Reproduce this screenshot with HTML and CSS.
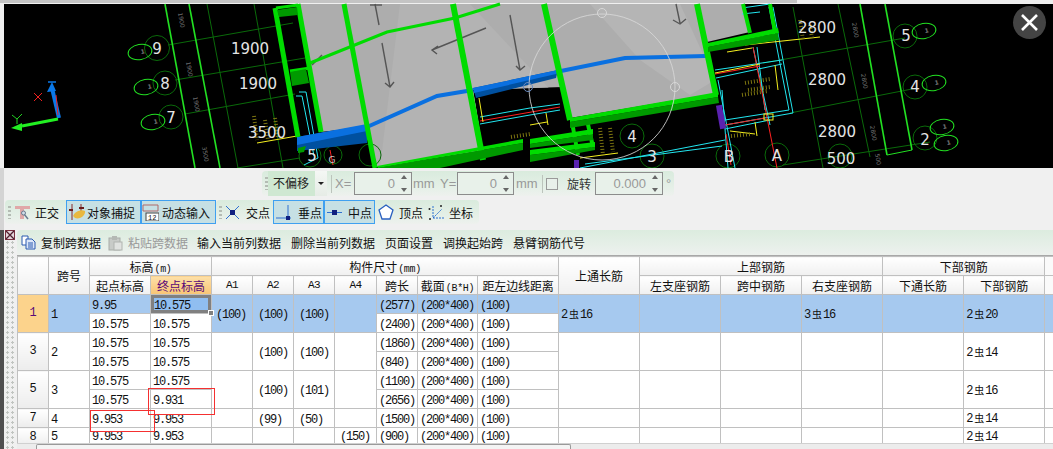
FILE: index.html
```html
<!DOCTYPE html>
<html lang="zh">
<head>
<meta charset="utf-8">
<title>梁平法表格</title>
<link rel="stylesheet" href="styles.css">
</head>
<body>
<div class="viewport">
<svg class="scene" width="1053" height="168" viewBox="0 0 1053 168">
  <defs>
    <clipPath id="floor"><polygon points="298,4 743,4 750,32 707,42 718,93 570,118 563,87 473,90 483,150 377,167 367,127 320,132"/></clipPath>
  </defs>
  <rect x="4" y="4" width="1049" height="164" fill="#000"/>
  <rect x="0" y="0" width="797" height="3" fill="#c4c4c4"/>
  <rect x="797" y="0" width="256" height="3" fill="#eee"/>
  <!-- floor -->
  <polygon points="298,4 743,4 750,32 707,42 718,93 570,118 563,87 473,90 483,150 377,167 367,127 320,132" fill="#adadad"/>
  <g clip-path="url(#floor)">
    <polygon points="400,4 470,4 560,100 470,168 380,168" fill="#b3b3b3"/>
    <polygon points="590,4 680,4 715,80 690,95 640,60" fill="#b5b5b5"/>
  </g>
  <!-- axes left -->
  <g fill="none" stroke="#0a6a0a" stroke-width="1">
    <line x1="207" y1="4" x2="238" y2="168"/><line x1="254" y1="4" x2="283" y2="168"/>
    <line x1="168" y1="45" x2="293" y2="23"/><line x1="175" y1="80" x2="305" y2="58"/><line x1="185" y1="114" x2="295" y2="94"/><line x1="237" y1="168" x2="300" y2="158"/>
    <circle cx="157" cy="48" r="12.5"/><circle cx="165" cy="83" r="12"/><circle cx="171" cy="117" r="12"/>
    <circle cx="310" cy="156" r="11"/><circle cx="333" cy="155" r="9"/><circle cx="370" cy="155" r="11"/>
    <circle cx="632" cy="136" r="12"/><circle cx="652" cy="156" r="12"/><circle cx="728" cy="156" r="12"/><circle cx="777" cy="155" r="12"/><circle cx="840" cy="156" r="12"/>
    <line x1="793" y1="7" x2="823" y2="168"/><line x1="838" y1="4" x2="870" y2="157"/>
    <line x1="905" y1="38" x2="763" y2="63"/><line x1="917" y1="88" x2="790" y2="113"/><line x1="930" y1="142" x2="783" y2="165"/>
    <circle cx="905" cy="36" r="12"/><circle cx="915" cy="87" r="12"/><circle cx="925" cy="138" r="12"/>
  </g>
  <g fill="none" stroke="#22e022" stroke-width="1.6">
    <line x1="165" y1="4" x2="195" y2="168"/><line x1="189" y1="4" x2="220" y2="168"/>
    <line x1="860" y1="4" x2="887" y2="155"/><line x1="885" y1="4" x2="912" y2="150"/>
    <ellipse cx="140" cy="52" rx="12" ry="7.5" transform="rotate(-10 140 52)" stroke-width="1"/>
    <ellipse cx="146" cy="87" rx="12" ry="7.5" transform="rotate(-10 146 87)" stroke-width="1"/>
    <ellipse cx="153" cy="122" rx="12" ry="7.5" transform="rotate(-10 153 122)" stroke-width="1"/>
    <ellipse cx="924" cy="31" rx="12" ry="7.5" transform="rotate(-10 924 31)" stroke-width="1"/>
    <ellipse cx="934" cy="83" rx="12" ry="7.5" transform="rotate(-10 934 83)" stroke-width="1"/>
    <ellipse cx="942" cy="127" rx="12" ry="7.5" transform="rotate(-10 942 127)" stroke-width="1"/>
    <ellipse cx="946" cy="143" rx="12" ry="7.5" transform="rotate(-10 946 143)" stroke-width="1"/>
    <line x1="912" y1="150" x2="887" y2="155" stroke-width="1"/>
  </g>
  <!-- cyan / red / yellow detailing -->
  <g fill="none" stroke-width="1">
    <g stroke="#22e6f0">
      <polyline points="299,92 306,92 318,158 304,165"/><polyline points="296,96 302,96 314,156"/>
      <line x1="480" y1="124" x2="530" y2="115"/><line x1="480" y1="117" x2="530" y2="108"/>
      <polyline points="773,7 793,113 725,125"/><polyline points="769,7 789,110 725,120"/>
      <line x1="753" y1="47" x2="770" y2="125"/><line x1="757" y1="47" x2="765" y2="110"/>
      <line x1="715" y1="70" x2="782" y2="60"/><line x1="716" y1="78" x2="782" y2="64"/>
      <line x1="725" y1="129" x2="770" y2="120"/><line x1="580" y1="168" x2="725" y2="140"/><line x1="585" y1="164" x2="722" y2="146"/>
      <line x1="718" y1="80" x2="735" y2="168"/><line x1="722" y1="90" x2="728" y2="168"/>
      <line x1="530" y1="115" x2="560" y2="110"/><line x1="530" y1="108" x2="560" y2="104"/>
      <line x1="742" y1="8" x2="770" y2="4"/><line x1="742" y1="14" x2="760" y2="12"/>
    </g>
    <g stroke="#ff2020">
      <line x1="753" y1="47" x2="777" y2="168"/><line x1="480" y1="121" x2="560" y2="107"/>
      <line x1="715" y1="74" x2="760" y2="66"/><line x1="725" y1="125" x2="765" y2="118"/><line x1="726" y1="134" x2="731" y2="165"/>
      <line x1="330" y1="150" x2="333" y2="165"/>
    </g>
    <g stroke="#f6f020">
      <line x1="257" y1="143" x2="297" y2="136"/><line x1="715" y1="73" x2="760" y2="64"/><line x1="727" y1="52" x2="752" y2="48"/>
      <line x1="745" y1="45" x2="820" y2="37"/><line x1="775" y1="65" x2="778" y2="90"/><line x1="755" y1="122" x2="757" y2="136"/>
      <line x1="479" y1="98" x2="483" y2="122"/><line x1="322" y1="146" x2="366" y2="141"/><line x1="580" y1="158" x2="618" y2="153"/><line x1="530" y1="125" x2="547" y2="122"/>
      <line x1="546" y1="113" x2="548" y2="125"/><rect x="764" y="114" width="9" height="6"/><line x1="730" y1="131" x2="755" y2="134"/>
    </g>
    <g stroke="#7c7410" stroke-width="4" stroke-dasharray="1 2">
      <line x1="254" y1="116" x2="257" y2="140"/><line x1="265" y1="120" x2="268" y2="140"/><line x1="275" y1="118" x2="278" y2="138"/>
      <line x1="745" y1="83" x2="770" y2="79"/><line x1="748" y1="90" x2="770" y2="87"/><line x1="742" y1="95" x2="768" y2="91"/>
      <line x1="600" y1="128" x2="603" y2="155"/><line x1="610" y1="128" x2="613" y2="152"/><line x1="731" y1="136" x2="752" y2="134"/>
      <line x1="800" y1="20" x2="803" y2="40"/><line x1="810" y1="25" x2="812" y2="38"/><line x1="511" y1="137" x2="530" y2="134"/>
    </g>
  </g>
  <!-- arrows on floor -->
  <g fill="none" stroke="#555" stroke-width="1.4">
    <line x1="375" y1="4" x2="379" y2="25"/><line x1="370" y1="5" x2="382" y2="5"/>
    <path d="M382 43L390 87M385 83L390 87L394 82"/>
    <path d="M486 28L432 50M438 46L432 50L437 54"/>
    <path d="M510 15L520 70M516 66L520 70L525 66"/>
    <path d="M676 4L680 23M673 20L680 24L686 19"/>
    <path d="M322 55L312 65"/>
  </g>
  <!-- blue beam -->
  <polygon points="297,137 367,125 367,143 297,151" fill="#0050a0"/>
  <polygon points="297,137 367,124 367,131 297,145" fill="#0a70e0"/>
  <polyline points="367,127 437,96 473,90" fill="none" stroke="#0a70e0" stroke-width="4"/>
  <polygon points="473,88 558,70 556,78 476,98" fill="#0050a0"/>
  <polygon points="473,88 558,70 556,74 474,93" fill="#0a70e0"/>
  <polyline points="556,72 625,58 706,56" fill="none" stroke="#0a70e0" stroke-width="4"/>
  <!-- green walls -->
  <g fill="none" stroke="#00dc00">
    <g stroke-width="5">
      <line x1="275" y1="8" x2="298" y2="137"/><line x1="298" y1="4" x2="321" y2="132"/>
      <line x1="344" y1="4" x2="375" y2="168"/>
    </g>
    <g stroke-width="6">
      <line x1="453" y1="4" x2="483" y2="160"/><line x1="544" y1="4" x2="570" y2="120"/><line x1="697" y1="4" x2="716" y2="95"/>
    </g>
    <g stroke-width="4">
      <line x1="743" y1="4" x2="750" y2="33"/><line x1="770" y1="4" x2="775" y2="32"/><line x1="587" y1="120" x2="593" y2="147"/>
      <line x1="572" y1="122" x2="578" y2="155"/>
    </g>
    <polyline points="310,63 387,32 455,18 500,4" stroke-width="3"/>
    <line x1="276" y1="8" x2="298" y2="5" stroke-width="3"/>
    <line x1="290" y1="71" x2="310" y2="68" stroke-width="3"/>
  </g>
  <g fill="#009a00">
    <polygon points="277,10 297,7 298,15 279,17"/><polygon points="290,72 306,69 309,83 292,86"/>
    <polygon points="708,47 778,33 779,40 708,52"/><polygon points="570,122 718,97 719,103 570,128"/>
    <polygon points="377,168 523,143 523,150 440,168"/><polygon points="530,144 593,134 593,140 530,148"/><polygon points="530,155 595,147 595,150 530,162"/>
    <polygon points="298,148 306,146 304,152 298,153"/>
  </g>
  <g fill="#00dc00">
    <polygon points="708,43 778,28 779,33 708,47"/><polygon points="570,118 718,92 718,97 570,122"/>
    <polygon points="377,166 523,139 523,143 378,168"/><polygon points="530,139 593,129 593,134 530,144"/><polygon points="530,150 595,142 595,147 530,155"/>
  </g>
  <rect x="718" y="105" width="6" height="24" fill="#5a22b0" transform="rotate(-10 721 117)"/>
  <rect x="574" y="160" width="5" height="8" fill="#5a22b0"/>
  <!-- tool circle -->
  <g fill="none" stroke="#d8d8d8" stroke-width="1">
    <circle cx="602" cy="87" r="73" opacity=".85"/>
    <circle cx="602" cy="13" r="4.5"/><circle cx="675" cy="87" r="4.5"/><circle cx="528" cy="87" r="4.5" stroke="#6c8cc0"/>
  </g>
  <!-- labels -->
  <g class="cad-num">
    <text x="157" y="54">9</text><text x="165" y="89">8</text><text x="171" y="123">7</text>
    <text x="250" y="54">1900</text><text x="258" y="89">1900</text><text x="267" y="138">3500</text>
    <text x="312" y="161">5</text><text x="632" y="142">4</text><text x="652" y="162">3</text><text x="729" y="162">B</text><text x="777" y="161">A</text>
    <text x="817" y="33">2800</text><text x="827" y="85">2800</text><text x="837" y="137">2800</text><text x="841" y="164">500</text>
    <text x="906" y="41">5</text><text x="915" y="92">4</text><text x="925" y="145">2</text><text x="332" y="163" class="cad-small">G</text>
  </g>
  <g class="cad-tiny">
    <text transform="translate(178,13) rotate(80)">1900</text><text transform="translate(186,62) rotate(80)">1900</text><text transform="translate(193,97) rotate(80)">1900</text><text transform="translate(202,147) rotate(80)">3500</text>
    <text transform="translate(852,23) rotate(80)">2800</text><text transform="translate(861,74) rotate(80)">2800</text><text transform="translate(870,126) rotate(80)">2800</text><text transform="translate(875,154) rotate(80)">500</text>
  </g>
  <g class="cad-note">
    <text transform="translate(141,54) rotate(-10)">1</text><text transform="translate(148,89) rotate(-10)">1</text><text transform="translate(154,124) rotate(-10)">1</text>
    <text transform="translate(925,33) rotate(-10)">1</text><text transform="translate(935,85) rotate(-10)">1</text><text transform="translate(943,129) rotate(-10)">1</text><text transform="translate(947,145) rotate(-10)">1</text>
  </g>
  <!-- origin gizmo -->
  <line x1="59" y1="118" x2="52" y2="88" stroke="#0a78e8" stroke-width="4"/>
  <line x1="56" y1="95" x2="58" y2="115" stroke="#f02020" stroke-width="1"/>
  <polygon points="52,82 47,92 56,91" fill="#0a78e8"/><line x1="48" y1="82" x2="56" y2="82" stroke="#0a78e8" stroke-width="1.5"/>
  <line x1="58" y1="119" x2="22" y2="126" stroke="#22f022" stroke-width="3"/>
  <polygon points="11,128 22,123 22,131" fill="#22f022"/>
  <path d="M34 93L42 101M42 93L34 101" stroke="#f02020" fill="none"/>
  <path d="M12 115L17 119L22 114M17 119L17 124" stroke="#22d022" fill="none"/>
</svg>
<button class="close" type="button" aria-label="关闭">
  <svg width="33" height="33" viewBox="0 0 33 33"><path d="M9 9L24 24M24 9L9 24" stroke="#fff" stroke-width="2.6" fill="none"/></svg>
</button>

<div class="toolbars">
  <div class="tb tb-offset">
    <span class="grip"></span>
    <span class="combo">不偏移</span>
    <span class="combo-arrow"></span>
    <span class="vsep"></span>
    <span class="dim lbl-x">X=</span>
    <span class="spin spin-x"><span>0</span><i class="arrows"></i></span>
    <span class="dim lbl-mm">mm</span>
    <span class="dim lbl-y">Y=</span>
    <span class="spin spin-y"><span>0</span><i class="arrows"></i></span>
    <span class="dim lbl-mm2">mm</span>
    <span class="vsep sep2"></span>
    <span class="check"></span>
    <span class="rot-label">旋转</span>
    <span class="spin spin-r"><span>0.000</span><i class="arrows"></i></span>
    <span class="dim deg">°</span>
  </div>
  <div class="tb-row">
    <div class="tb tb-a">
      <span class="grip"></span>
      <span class="tool t-ortho">
        <svg width="16" height="17" viewBox="0 0 16 17"><path d="M0 2H15V5H9V15H5V5H0Z" fill="#e0a8a8"/><path d="M9 10l4 5" stroke="#6c7c90" stroke-width="1.5"/><circle cx="8.500" cy="9" r="2" fill="#d0dce8" stroke="#6c7c90"/></svg>
        正交</span>
      <span class="tool on t-snap">
        <svg width="17" height="18" viewBox="0 0 17 18"><path d="M3 1V17M12 1V9" stroke="#8a2a2a"/><path d="M0 7H4M10 5H15" stroke="#6a1a1a" stroke-width="2"/><path d="M4 13C6 8 13 6 16 8C17 12 11 17 6 15Z" fill="#e8b840"/></svg>
        对象捕捉</span>
      <span class="tool on t-dyn">
        <svg width="17" height="17" viewBox="0 0 17 17"><path d="M1 1H16M1 1V7H16V1" stroke="#b06868" fill="none"/><rect x="4" y="9" width="13" height="8" fill="#fff" stroke="#444"/><text x="6" y="16" class="ico-num">12</text></svg>
        动态输入</span>
    </div>
    <div class="tb tb-b">
      <span class="grip"></span>
      <span class="tool t-cross">
        <svg width="15" height="15" viewBox="0 0 15 15"><path d="M1 1L14 14M14 1L1 14" stroke="#3070d0"/><rect x="5" y="5" width="5" height="5" fill="#102080"/></svg>
        交点</span>
      <span class="tool on t-perp">
        <svg width="15" height="15" viewBox="0 0 15 15"><path d="M0 13H15M12 0V15" stroke="#3070d0"/><rect x="10" y="11" width="4" height="4" fill="#102080"/></svg>
        垂点</span>
      <span class="tool on t-mid">
        <svg width="15" height="15" viewBox="0 0 15 15"><path d="M0 7.500H15" stroke="#3070d0"/><rect x="5" y="5" width="5" height="5" fill="#102080"/></svg>
        中点</span>
      <span class="tool t-vert">
        <svg width="16" height="16" viewBox="0 0 16 16"><path d="M8 1L15 6L12 15H4L1 6Z" fill="#fff" stroke="#2a60c0" stroke-width="1.300"/></svg>
        顶点</span>
      <span class="tool t-coord">
        <svg width="17" height="17" viewBox="0 0 17 17"><path d="M5 2V14H16M5 14L14 5" stroke="#2a70d0" fill="none" stroke-dasharray="2 1"/><circle cx="1.500" cy="5" r="1" fill="#222"/><circle cx="13" cy="2" r="1" fill="#222"/><circle cx="2" cy="15" r="1" fill="#222"/></svg>
        坐标</span>
    </div>
  </div>
</div>

<div class="work">
  <div class="rail">
    <span class="rail-close"><svg width="10" height="10" viewBox="0 0 10 10"><rect x=".5" y=".5" width="9" height="9" fill="#e4d8dc" stroke="#7a3040"/><path d="M1 1L9 9M9 1L1 9" stroke="#502030" stroke-width="1.300"/></svg></span>
    <span class="rail-grip"></span>
  </div>
  <div class="panel">
    <div class="ribbon">
      <span class="rb rb-copy"><svg width="15" height="15" viewBox="0 0 15 15"><path d="M1 1H7V10H1Z" fill="#fff" stroke="#2a5ab0"/><path d="M5 4H11L14 7V14H5Z" fill="#dbe6f8" stroke="#2a5ab0"/><path d="M7 8H12M7 10H12M7 12H12" stroke="#2a5ab0"/></svg>复制跨数据</span>
      <span class="rb rb-paste off"><svg width="15" height="16" viewBox="0 0 15 16"><rect x="1" y="3" width="11" height="12" fill="#c8cbc8" stroke="#a8aca8"/><rect x="4" y="1" width="5" height="4" fill="#b4b8b4"/><rect x="6" y="7" width="8" height="8" fill="#e0e2e0" stroke="#b0b4b0"/></svg>粘贴跨数据</span>
      <span class="rb rb-input">输入当前列数据</span>
      <span class="rb">删除当前列数据</span>
      <span class="rb">页面设置</span>
      <span class="rb">调换起始跨</span>
      <span class="rb">悬臂钢筋代号</span>
    </div>
    <div class="grid-wrap">
      <table class="grid">
        <colgroup>
          <col class="c31"><col class="c41"><col class="c61"><col class="c61"><col class="c41"><col class="c41"><col class="c41"><col class="c42"><col class="c41"><col class="c60"><col class="c81"><col class="c81"><col class="c81"><col class="c81"><col class="c81"><col class="c81"><col class="c81"><col class="c9">
        </colgroup>
        <thead>
          <tr>
            <th rowspan="2" class="corner"></th>
            <th rowspan="2">跨号</th>
            <th colspan="2">标高<small>(m)</small></th>
            <th colspan="7">构件尺寸<small>(mm)</small></th>
            <th rowspan="2">上通长筋</th>
            <th colspan="3">上部钢筋</th>
            <th colspan="2">下部钢筋</th>
            <th class="blank"></th>
          </tr>
          <tr>
            <th>起点标高</th>
            <th class="picked">终点标高</th>
            <th class="mono">A1</th><th class="mono">A2</th><th class="mono">A3</th><th class="mono">A4</th>
            <th>跨长</th><th>截面<small>(B*H)</small></th><th class="tight">距左边线距离</th>
            <th>左支座钢筋</th><th>跨中钢筋</th><th>右支座钢筋</th><th>下通长筋</th><th>下部钢筋</th><th class="blank"></th>
          </tr>
        </thead>
        <tbody>
          <tr class="sel">
            <th rowspan="2" class="rowh active">1</th><td rowspan="2">1</td>
            <td class="first">9.95</td><td class="current">10.575<i class="handle"></i></td>
            <td rowspan="2" class="shift">(100)</td><td rowspan="2" class="mid">(100)</td><td rowspan="2" class="mid">(100)</td><td rowspan="2"></td>
            <td>(2577)</td><td>(200*400)</td><td>(100)</td>
            <td rowspan="2">2<span class="bar">虫</span>16</td><td rowspan="2"></td><td rowspan="2"></td><td rowspan="2">3<span class="bar">虫</span>16</td><td rowspan="2"></td><td rowspan="2">2<span class="bar">虫</span>20</td><td rowspan="2"></td>
          </tr>
          <tr>
            <td class="first">10.575</td><td>10.575</td><td>(2400)</td><td>(200*400)</td><td>(100)</td>
          </tr>
          <tr>
            <th rowspan="2" class="rowh">3</th><td rowspan="2">2</td>
            <td class="first">10.575</td><td>10.575</td>
            <td rowspan="2"></td><td rowspan="2" class="mid">(100)</td><td rowspan="2" class="mid">(100)</td><td rowspan="2"></td>
            <td>(1860)</td><td>(200*400)</td><td>(100)</td>
            <td rowspan="2"></td><td rowspan="2"></td><td rowspan="2"></td><td rowspan="2"></td><td rowspan="2"></td><td rowspan="2">2<span class="bar">虫</span>14</td><td rowspan="2"></td>
          </tr>
          <tr>
            <td class="first">10.575</td><td>10.575</td><td>(840)</td><td>(200*400)</td><td>(100)</td>
          </tr>
          <tr>
            <th rowspan="2" class="rowh">5</th><td rowspan="2">3</td>
            <td class="first">10.575</td><td>10.575</td>
            <td rowspan="2"></td><td rowspan="2" class="mid">(100)</td><td rowspan="2" class="mid">(101)</td><td rowspan="2"></td>
            <td>(1100)</td><td>(200*400)</td><td>(100)</td>
            <td rowspan="2"></td><td rowspan="2"></td><td rowspan="2"></td><td rowspan="2"></td><td rowspan="2"></td><td rowspan="2">2<span class="bar">虫</span>16</td><td rowspan="2"></td>
          </tr>
          <tr>
            <td class="first">10.575</td><td>9.931</td><td>(2656)</td><td>(200*400)</td><td>(100)</td>
          </tr>
          <tr>
            <th class="rowh">7</th><td>4</td><td class="first">9.953</td><td>9.953</td><td></td><td class="mid">(99)</td><td class="mid">(50)</td><td></td>
            <td>(1500)</td><td>(200*400)</td><td>(100)</td><td></td><td></td><td></td><td></td><td></td><td>2<span class="bar">虫</span>14</td><td></td>
          </tr>
          <tr class="last">
            <th class="rowh">8</th><td>5</td><td class="first">9.953</td><td>9.953</td><td></td><td></td><td></td><td class="mid">(150)</td>
            <td>(900)</td><td>(200*400)</td><td>(100)</td><td></td><td></td><td></td><td></td><td></td><td>2<span class="bar">虫</span>14</td><td></td>
          </tr>
        </tbody>
      </table>
      <span class="mark mark-a"></span>
      <span class="mark mark-b"></span>
    </div>
    <div class="hscroll"><span class="hs-btn"></span><span class="hs-thumb"></span></div>
  </div>
</div>
</div>
</body>
</html>
```
FILE: styles.css
```css
* { box-sizing: border-box; }
html, body { margin: 0; padding: 0; height: 100%; overflow: hidden; }
body {
  background: #f0f0f0;
  color: #111;
  font: 12px "Noto Sans CJK SC", "Liberation Sans", sans-serif;
}
.viewport { position: relative; width: 1053px; height: 449px; display: flex; flex-direction: column; overflow: hidden; }
.scene { display: block; flex: none; }
.scene text { font-family: "DejaVu Sans", sans-serif; }
.cad-num text { fill: #e4e4e4; font-size: 15px; text-anchor: middle; }
.scene .cad-small { font-size: 9px; fill: #ccc; }
.cad-tiny text { fill: #777; font-size: 6px; }
.cad-note text { fill: #777; font-size: 6px; font-weight: bold; }
.ico-num { font: 7px "Liberation Mono", monospace; fill: #111; }

.close {
  position: absolute; left: 1013px; top: 6px; width: 33px; height: 33px;
  border: 0; padding: 0; border-radius: 50%; background: #444;
  display: flex; align-items: center; justify-content: center;
}

/* toolbars */
.toolbars { flex: none; height: 62px; padding-top: 3px; display: flex; flex-direction: column; gap: 4px; border-left: 4px solid #d4d4d4; }
.tb { display: flex; align-items: center; background: linear-gradient(#d9ebdd, #e6f0e8 70%, #eef1ee); border-radius: 4px; }
.tb-offset { margin-left: 258px; width: 412px; height: 25px; color: #999; font-size: 12px; }
.tb-row { display: flex; margin-left: 1px; height: 24px; gap: 3px; }
.tb-a { width: 208px; }
.tb-b { width: 263px; }
.grip {
  width: 3px; height: 13px; margin-left: 3px; flex: none;
  background: repeating-linear-gradient(#b4bcb4 0 2px, transparent 2px 4px);
}
.combo { width: 47px; height: 25px; padding-left: 5px; background: #cfe8d2; color: #222; font-size: 12px; line-height: 24px; }
.combo-arrow { width: 12px; height: 25px; background: #e6f0e8 linear-gradient(#f4f7f4, #e6ece6); position: relative; }
.combo-arrow::after { content: ""; position: absolute; left: 3px; top: 11px; border: 3px solid transparent; border-top: 3px solid #222; }
.vsep { width: 1px; height: 18px; margin-left: 4px; background: #bcc4bc; flex: none; }
.dim { color: #999; flex: none; line-height: 1; font-family: "Liberation Sans", sans-serif; font-size: 13px; }
.lbl-x { margin-left: 3px; width: 19px; }
.lbl-mm { margin-left: 1px; width: 27px; }
.lbl-y { width: 17px; }
.lbl-mm2 { margin-left: 2px; width: 22px; }
.spin { height: 23px; border: 1px solid #8c8c8c; flex: none; display: flex; align-items: center; justify-content: flex-end; gap: 5px; padding-right: 2px; color: #999; font: 13px "Liberation Sans", sans-serif; background: #e8f1ea; }
.spin-x { width: 58px; }
.spin-y { width: 57px; }
.spin-r { width: 68px; margin-left: 4px; }
.arrows { width: 9px; height: 17px; position: relative; flex: none; display: block; }
.arrows::before, .arrows::after { content: ""; position: absolute; left: 1px; border: 3.5px solid transparent; }
.arrows::before { top: -3px; border-bottom: 4px solid #666; }
.arrows::after { bottom: -3px; border-top: 4px solid #666; }
.sep2 { margin-left: 4px; }
.check { width: 12px; height: 12px; margin-left: 3px; border: 1px solid #9a9a9a; background: #e8f0ea; flex: none; }
.rot-label { margin-left: 9px; width: 24px; color: #333; font-size: 12px; flex: none; }
.deg { margin-left: 3px; }

.tool { display: flex; align-items: center; flex: none; height: 24px; font-size: 12px; color: #111; white-space: nowrap; }
.tool.on { background: #c6e0e4; border: 1px solid #3fa0f0; }
.t-ortho { width: 50px; margin-left: 4px; gap: 4px; }
.t-snap { width: 75px; margin-left: 1px; gap: 1px; padding-left: 2px; }
.t-dyn { width: 75px; gap: 3px; padding-left: 0; }
.t-cross { width: 48px; margin-left: 3px; gap: 6px; }
.t-perp { width: 51px; gap: 7px; padding-left: 2px; }
.t-mid { width: 51px; gap: 6px; padding-left: 2px; }
.t-vert { width: 45px; margin-left: 3px; gap: 5px; }
.t-coord { width: 50px; margin-left: 5px; gap: 4px; }

/* lower work area */
.work { flex: 1; min-height: 0; display: flex; }
.rail { width: 17px; flex: none; display: flex; flex-direction: column; border-left: 4px solid #505050; padding-left: 1px; }
.rail-close { height: 11px; display: block; }
.rail-close svg { display: block; }
.rail-grip {
  flex: 1; margin: 0 0 0 1px; width: 10px;
  background-image: radial-gradient(circle at 1.500px 1.500px, #c0c4c0 1.200px, transparent 1.300px);
  background-size: 5px 5px;
}
.panel { flex: 1; min-width: 0; display: flex; flex-direction: column; }
.ribbon { flex: none; height: 26px; display: flex; align-items: center; background: linear-gradient(#dcecdf, #e6efe8 60%, #edf1ee); border-bottom: 1px solid #a8a8a8; font-size: 12px; color: #111; white-space: nowrap; border-radius: 4px 0 0 0; }
.rb { display: flex; align-items: center; flex: none; margin-left: 10px; }
.rb svg { margin-right: 5px; }
.rb-copy { margin-left: 4px; }
.rb-paste { margin-left: 7px; }
.rb-input { margin-left: 9px; }
.rb.off { color: #999; }

.grid-wrap { position: relative; flex: 1; min-height: 0; overflow: hidden; background: #fff; }
.grid { width: 1036px; table-layout: fixed; border-collapse: collapse; font: 12px "Noto Sans CJK SC", sans-serif; }
.c31 { width: 31px; } .c41 { width: 41px; } .c42 { width: 42px; } .c60 { width: 60px; } .c61 { width: 61px; } .c81 { width: 81px; } .c9 { width: 9px; }
.grid tr { height: 19px; }
.grid th, .grid td { height: 19px; padding: 0; border: 1px solid #c0c0c0; overflow: hidden; white-space: nowrap; line-height: 17px; }
.grid thead th { font-weight: 400; background: linear-gradient(#fff, #f0f0f0); color: #111; }
.grid thead small { font: 10px "Liberation Mono", monospace; letter-spacing: -.3px; margin-left: 1px; }
.grid .mono { font: 11px "Liberation Mono", monospace; letter-spacing: -.6px; }
.grid .tight { letter-spacing: -.15px; }
.grid .picked { background: linear-gradient(#fde0a8, #f8c474); color: #5a0a78; }
.grid .blank { background: #fafafa; border-right: 0; }
.grid td { font: 12px/14px "Liberation Mono", "Noto Sans CJK SC", monospace; letter-spacing: -1.2px; padding: 3px 0 0 2px; text-align: left; color: #111; vertical-align: middle; }
.grid .bar { font-size: 10px; letter-spacing: 0; margin: 0 1px 0 2px; }
.grid .first { border-left: 1px solid #111; }
.grid .mid { padding-left: 5px; }
.grid .shift { padding-left: 4px; }
.rowh { font: 12px "Liberation Mono", monospace; font-weight: 400; background: linear-gradient(#fff, #ececec); }
.grid .rowh.active { background: #fcd38c; color: #5a0a78; }
.grid .last td, .grid .last th { line-height: 10px; vertical-align: top; padding-top: 4px; }
.sel td { background: #a6c9ef; }
.grid .current { background: #90bef0; position: relative; box-shadow: inset 0 0 0 3px #808080; overflow: visible; padding-left: 3px; }
.handle { position: absolute; right: -3px; bottom: -3px; width: 6px; height: 6px; background: #808080; border: 1px solid #fff; }
.mark { position: absolute; border: 1px solid #f53030; pointer-events: none; }
.mark-a { left: 131px; top: 132px; width: 67px; height: 27px; }
.mark-b { left: 73px; top: 154px; width: 65px; height: 22px; }

.hscroll { flex: none; height: 6px; display: flex; background: #ececec; border-top: 1px solid #d0d0d0; }
.hs-btn { width: 19px; }
.hs-thumb { width: 535px; background: #f4f4f4; border: 1px solid #9a9a9a; border-bottom: 0; border-radius: 2px 2px 0 0; }
```
